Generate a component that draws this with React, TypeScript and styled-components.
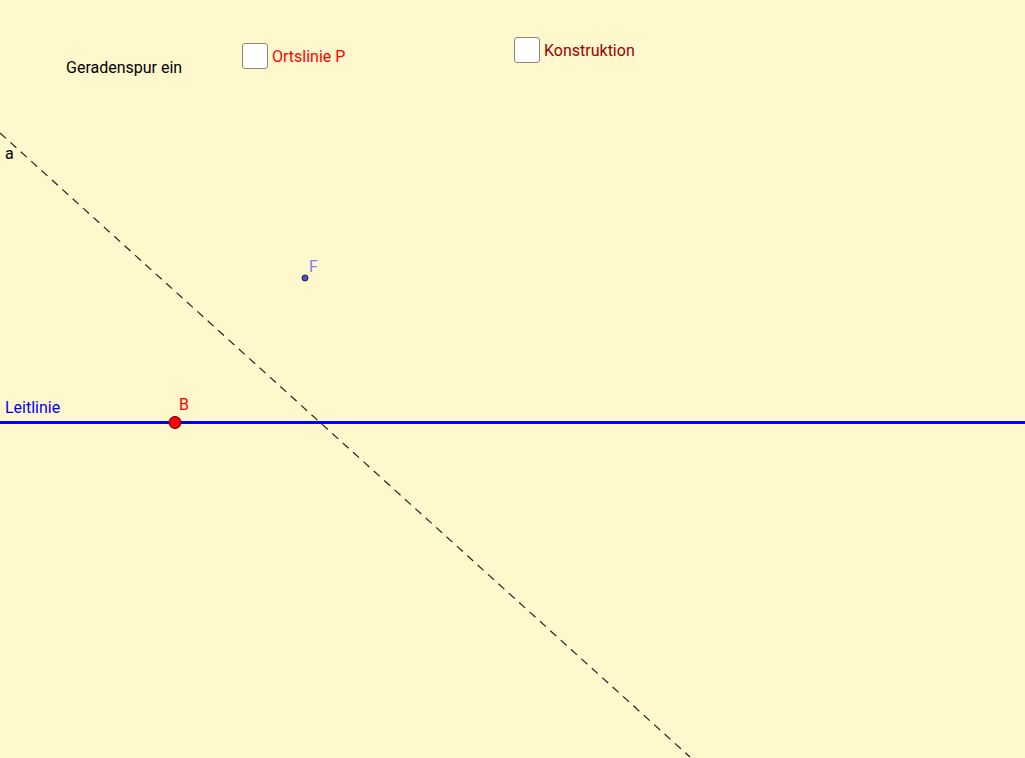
import styled, { createGlobalStyle } from "styled-components";

const GlobalStyle = createGlobalStyle`
  html, body {
    margin: 0;
    padding: 0;
    background: #fff8cd;
  }
  body {
    font-family: Roboto, "Noto Sans", sans-serif;
  }
`;

const Canvas = styled.div`
  position: relative;
  width: 1025px;
  height: 758px;
  overflow: hidden;
  background: #fff8cd;
`;

const Drawing = styled.svg`
  display: block;
  width: 100%;
  height: 100%;
`;

const Label = styled.span<{ $x: number; $y: number; $color: string }>`
  position: absolute;
  left: ${(p) => p.$x}px;
  top: ${(p) => p.$y}px;
  font-size: 16px;
  line-height: 18px;
  color: ${(p) => p.$color};
  white-space: nowrap;
`;

const CheckRow = styled.label<{ $x: number; $y: number; $color: string }>`
  position: absolute;
  left: ${(p) => p.$x}px;
  top: ${(p) => p.$y}px;
  display: flex;
  align-items: center;
  gap: 4px;
  font-size: 16px;
  color: ${(p) => p.$color};
  white-space: nowrap;
`;

const Box = styled.span`
  width: 24px;
  height: 24px;
  border: 1px solid #8a8670;
  border-radius: 3px;
  background: #ffffff;
`;

const checks = [
  { x: 242, y: 43, text: "Ortslinie P", color: "#ff0000" },
  { x: 514, y: 37, text: "Konstruktion", color: "#990000" },
];

export default function App() {
  return (
    <>
      <GlobalStyle />
      <Canvas>
        <Drawing viewBox="0 0 1025 758">
          <line
            x1={0}
            y1={133}
            x2={690}
            y2={757}
            stroke="#222"
            strokeWidth={1.2}
            strokeDasharray="8 6"
          />
          <line x1={0} y1={422.5} x2={1025} y2={422.5} stroke="#0000ff" strokeWidth={3} />
          <circle cx={305} cy={278} r={3} fill="#4d4dd6" stroke="#1a1a50" strokeWidth={1} />
          <circle cx={175} cy={422.5} r={6} fill="#ff0000" stroke="#550000" strokeWidth={1} />
        </Drawing>
        <Label $x={66} $y={59} $color="#000000">
          Geradenspur ein
        </Label>
        <Label $x={5} $y={145} $color="#000000">
          a
        </Label>
        <Label $x={309} $y={258} $color="#8080e6">
          F
        </Label>
        <Label $x={5} $y={399} $color="#0000ff">
          Leitlinie
        </Label>
        <Label $x={179} $y={396} $color="#ff0000">
          B
        </Label>
        {checks.map((c) => (
          <CheckRow key={c.text} $x={c.x} $y={c.y} $color={c.color}>
            <Box />
            {c.text}
          </CheckRow>
        ))}
      </Canvas>
    </>
  );
}
